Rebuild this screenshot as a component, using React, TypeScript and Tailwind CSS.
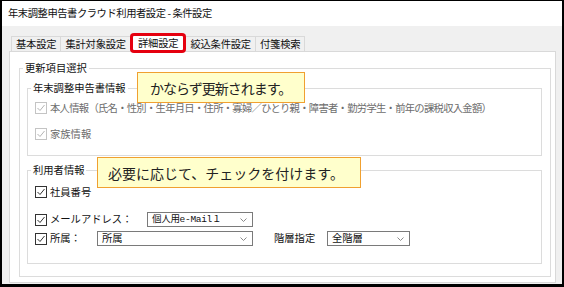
import React from "react";

// checkbox in the old windows style
const Check = ({ disabled }: { disabled?: boolean }) => (
  <span
    className={`flex h-[12px] w-[12px] shrink-0 items-center justify-center border bg-white ${
      disabled ? "border-[#c4c4c4]" : "border-[#333333]"
    }`}
  >
    <svg width="10" height="10" viewBox="0 0 10 10">
      <polyline
        points="1.5,5 4,7.5 8.5,2"
        fill="none"
        stroke={disabled ? "#b4b4b4" : "#333333"}
        strokeWidth="1"
      />
    </svg>
  </span>
);

const Select = ({
  value,
  width,
  mono,
}: {
  value: string;
  width: string;
  mono?: boolean;
}) => (
  <div
    className={`flex h-[15px] items-center justify-between border border-[#7a7a7a] bg-white pl-[4px] pr-[5px] ${width}`}
  >
    <span
      className={
        mono
          ? "font-['Liberation_Mono','Noto_Sans_CJK_JP',monospace] text-[9.5px] leading-none tracking-[-0.3px]"
          : "text-[10.3px] leading-none"
      }
    >
      {value}
    </span>
    <svg width="7" height="4" viewBox="0 0 7 4">
      <polyline points="0.5,0.5 3.5,3.5 6.5,0.5" fill="none" stroke="#8a8a8a" strokeWidth="1" />
    </svg>
  </div>
);

const Tab = ({ label, active }: { label: string; active?: boolean }) =>
  active ? (
    <div className="relative z-10 -mb-px -ml-px flex h-[18px] items-center border-x border-t border-[#d9d9d9] bg-white px-[7px]">
      {label}
      <div className="absolute -top-[2px] -left-[1px] -right-[1px] -bottom-[1px] rounded-[4px] border-[3px] border-[#e5000f]" />
    </div>
  ) : (
    <div className="-ml-px flex h-[15px] items-center border-x border-t border-[#d9d9d9] bg-[#f0f0f0] px-[4px]">
      {label}
    </div>
  );

export default function App() {
  return (
    <div className="relative flex h-[287px] w-[564px] flex-col border-t border-l-2 border-r-2 border-b-[3px] border-black bg-[#f0f0f0] font-['Noto_Sans_CJK_JP',sans-serif] text-[10.3px] leading-none text-[#111]">
      <div className="flex h-[25px] shrink-0 items-center bg-white pl-[6px] tracking-[-0.45px]">
        年末調整申告書クラウド利用者設定 - 条件設定
      </div>

      <div className="flex flex-1 flex-col pt-[8px] pr-[6px] pb-[1px] pl-[7px]">
        <div className="flex h-[17px] items-end pl-[3px] tracking-[-0.2px]">
          <Tab label="基本設定" />
          <Tab label="集計対象設定" />
          <Tab label="詳細設定" active />
          <Tab label="絞込条件設定" />
          <Tab label="付箋検索" />
        </div>

        <div className="flex flex-1 flex-col border border-[#d9d9d9] bg-white pt-[9px] pr-[4px] pb-[4px] pl-[9px]">
          <fieldset className="border border-[#dcdcdc]">
            <legend className="ml-[3px] h-[14px] px-[2px] leading-[14px]">更新項目選択</legend>
            <div className="flex flex-col pt-[6px] pr-[8px] pb-[12px] pl-[7px]">
              <fieldset className="border border-[#dcdcdc]">
                <legend className="ml-[3px] h-[14px] px-[2px] leading-[14px]">年末調整申告書情報</legend>
                <div className="flex flex-col gap-[10px] pt-[5px] pb-[13px] pl-[7px] text-[#6d6d6d]">
                  <div className="flex h-[16px] items-center gap-[3px]">
                    <Check disabled />
                    <span className="tracking-[-0.7px]">
                      本人情報（氏名・性別・生年月日・住所・寡婦／ひとり親・障害者・勤労学生・前年の課税収入金額）
                    </span>
                  </div>
                  <div className="flex h-[16px] items-center gap-[3px]">
                    <Check disabled />
                    <span>家族情報</span>
                  </div>
                </div>
              </fieldset>

              <fieldset className="mt-[7px] border border-[#dcdcdc]">
                <legend className="ml-[3px] h-[14px] px-[2px] leading-[14px]">利用者情報</legend>
                <div className="flex flex-col pt-[7px] pb-[17px] pl-[7px]">
                  <div className="flex h-[16px] items-center gap-[3px]">
                    <Check />
                    <span>社員番号</span>
                  </div>
                  <div className="mt-[12px] flex h-[15px] items-center">
                    <div className="flex w-[112px] items-center gap-[3px]">
                      <Check />
                      <span>メールアドレス：</span>
                    </div>
                    <Select value="個人用e-Mail１" width="w-[106px]" mono />
                  </div>
                  <div className="mt-[4px] flex h-[15px] items-center">
                    <div className="flex w-[62px] items-center gap-[3px]">
                      <Check />
                      <span>所属：</span>
                    </div>
                    <Select value="所属" width="w-[156px]" />
                    <span className="ml-[21px] w-[53px]">階層指定</span>
                    <Select value="全階層" width="w-[83px]" />
                  </div>
                </div>
              </fieldset>
            </div>
          </fieldset>
        </div>
      </div>

      <div className="absolute top-[71px] left-[135px] flex h-[31px] w-[168px] items-center border border-[#f0a030] bg-[#ffffcc] pl-[12px] text-[14px] tracking-[-1px] text-[#222]">
        かならず更新されます。
      </div>
      <div className="absolute top-[156px] left-[95px] flex h-[31px] w-[264px] items-center border border-[#f0a030] bg-[#ffffcc] pl-[10px] text-[14px] text-[#222]">
        必要に応じて、チェックを付けます。
      </div>
    </div>
  );
}
